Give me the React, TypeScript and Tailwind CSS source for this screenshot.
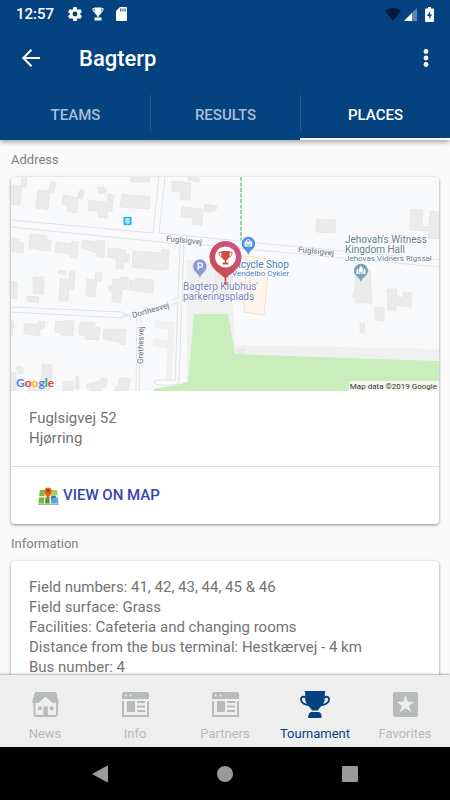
import React, { useState } from 'react';

const BUILDINGS = [
  '11,185 22,186 20,205 11,204',
  '22,177 27,178 26,187 21,186',
  '38,190 50,191 48,210 36,208',
  '50,182 56,183 54,193 49,191',
  '63,195 78,198 77,213 67,211 67,205 62,204',
  '80,190 84,191 82,199 78,198',
  '98,187 106,188 106,194 98,193',
  '89,200 107,202 108,194 114,195 112,211 107,212 107,218 98,217 98,211 88,211',
  '122,194 150,197 149,209 120,207',
  '131,177 150,177 150,182 131,182',
  '11,238 19,239 19,242 24,243 23,253 11,251',
  '30,234 47,236 47,240 51,241 50,251 39,250 29,248',
  '56,242 71,244 72,241 78,242 77,258 70,257 70,254 55,252',
  '83,240 98,242 98,240 105,241 104,258 97,257 97,253 90,251 90,250 82,248',
  '108,248 126,250 126,254 130,255 129,263 124,262 123,269 116,268 116,259 107,257',
  '133,251 161,253 162,249 169,250 168,269 160,270 132,267',
  '172,181 191,183 190,200 180,199 181,192 172,191',
  '188,177 199,177 199,182 188,180',
  '182,207 203,209 202,225 192,224 193,218 181,217',
  '205,204 217,206 216,210 210,212 204,211',
  '11,281 17,282 17,299 11,298',
  '33,277 44,277 43,295 33,293',
  '58,270 66,271 65,274 58,273',
  '27,296 39,297 38,303 27,301',
  '60,279 69,280 70,271 75,272 74,289 69,289 68,301 59,301',
  '87,279 95,280 96,272 102,273 101,281 97,281 95,297 86,296',
  '113,279 121,279 121,277 128,278 127,289 122,290 121,303 112,302 112,292 109,291 109,286 113,286',
  '129,280 135,281 136,278 154,280 153,293 129,290',
  '24,324 38,324 39,321 45,322 44,328 40,329 40,336 24,334',
  '11,320 13,320 13,325 15,325 13,328 12,336 11,336',
  '56,321 66,322 66,320 74,321 73,336 61,335 61,333 55,332',
  '80,322 95,323 95,327 100,328 99,340 85,339 85,336 79,334',
  '104,329 126,329 125,345 120,344 120,342 103,339',
  '16,368 19,366 23,368 23,374 18,373',
  '11,372 16,373 16,391 11,391',
  '42,364 52,365 52,376 49,391 28,391 28,382 42,382',
  '63,382 73,381 73,391 63,391',
  '76,376 79,377 79,389 75,388',
  '87,384 100,381 102,378 107,379 106,387 102,388 101,391 90,391 90,389 87,388',
  '119,378 130,378 129,391 115,391 115,387 119,386',
  '317,219 336,220 335,233 316,232',
  '411,209 423,210 422,226 429,227 430,211 439,212 439,239 428,238 429,231 410,230',
  '355,268 370,270 372,303 355,303 355,298 353,297 353,292 355,292',
  '387,289 396,289 397,297 403,298 403,292 412,293 411,307 403,306 396,305 396,311 388,310',
  '375,307 384,307 384,321 375,320',
  '360,323 365,323 364,333 360,332',
  '238,349 245,349 245,354 238,354',
];

const ROADS = [
  'M11 220 L153 233 L159 177',
  'M165 177 L159 233 L300 247 L439 260',
  'M11 227 L180 244 L178 298 L172 300 M170 306 L178 302 L175 380 L158 380 Q154 381 154 383 Q155 385 158 385 L176 385 Q179 384 179 381 L184 243 L300 254 L439 267',
  'M11 307 L122 312 L123 314 L132 315 M11 312 L122 318 L123 316 L137 317 L136 391 M141 317 L139 391',
];

const INFO = [
  'Field numbers: 41, 42, 43, 44, 45 & 46',
  'Field surface: Grass',
  'Facilities: Cafeteria and changing rooms',
  'Distance from the bus terminal: Hestkærvej - 4 km',
  'Bus number: 4',
];

function StaticMap() {
  return (
    <svg viewBox="11 177 428 214" className="block w-full rounded-t-sm" role="img" aria-label="Map of Fuglsigvej 52" fontFamily="Roboto, sans-serif">
      <rect x="11" y="177" width="428" height="214" fill="#f8f9fb" />
      <polygon points="187,260 217,262 232,290 235,345 439,349 439,363 235,356 230,391 160,391 187,384" fill="#f0f0f0" />
      <polygon points="156,320 175,322 172,380 166,379 167,348 153,347 153,339 168,340 168,329 155,328" fill="#f1f1f1" />
      <polygon points="194,314 228,314 235,354 439,361 439,391 154,391 154,389 176,385 188,382" fill="#c8efbb" />
      <g fill="#ebebeb" stroke="#e0e0e0" strokeWidth="0.6">
        {BUILDINGS.map((points) => (
          <polygon key={points} points={points} />
        ))}
        <polygon points="216,268 233,270 232,295 215,293" />
      </g>
      <polygon points="246,256 269,259 264,315 244,312" fill="#fef6ec" stroke="#f7ddc2" strokeWidth="1" />
      <g fill="none" stroke="#e1e2e4" strokeWidth="1">
        {ROADS.map((d) => (
          <path key={d} d={d} />
        ))}
      </g>
      <path d="M241 177 V240" stroke="#5cb878" strokeWidth="1.2" strokeDasharray="4 1.5" />

      {/* bus stop */}
      <rect x="123.500" y="217" width="8" height="8" rx="0.5" fill="#1eb6f5" />
      <rect x="125.500" y="218.500" width="4" height="5" rx="0.8" fill="#fff" />
      <path d="M126 220.500 h3 M126 222.300 h3" stroke="#1eb6f5" strokeWidth="0.7" />

      {/* street names */}
      <g fill="#6b7075" fontSize="8" stroke="#f8f9fb" strokeWidth="2" paintOrder="stroke">
        <text x="166" y="241" transform="rotate(6 166 241)">Fuglsigvej</text>
        <text x="298" y="252" transform="rotate(6 298 252)">Fuglsigvej</text>
        <text x="133" y="318" transform="rotate(-16 133 318)">Dorthesvej</text>
        <text x="143" y="364" transform="rotate(-89 143 364)">Grethesvej</text>
      </g>

      {/* places */}
      <g stroke="#ffffff" strokeWidth="1.5" paintOrder="stroke">
        <g fill="#5d7f92">
          <text x="345" y="243" fontSize="10">Jehovah's Witness</text>
          <text x="345" y="253" fontSize="10">Kingdom Hall</text>
          <text x="345" y="261" fontSize="8">Jehovas Vidners Rigssal</text>
        </g>
        <g fill="#3f7fc4">
          <text x="232" y="268" fontSize="10">Bicycle Shop</text>
          <text x="232" y="276" fontSize="8">Vendelbo Cykler</text>
        </g>
        <g fill="#7781b8">
          <text x="183" y="290" fontSize="10">Bagterp Klubhus'</text>
          <text x="183" y="300" fontSize="10">parkeringsplads</text>
        </g>
      </g>

      <path d="M200 278 C198.500 273 193 271.500 193 266 A6.800 6.800 0 0 1 206.600 266 C206.600 271.500 201.500 273 200 278Z" fill="#8d97de" />
      <path d="M198.200 270 V263.200 h2.200 a2 2 0 0 1 0 4 h-2" fill="none" stroke="#fff" strokeWidth="1.300" />
      <path d="M248.300 255 C247 250 241.700 249 241.700 243.500 A6.700 6.700 0 0 1 255.100 243.500 C255.100 249 249.600 250 248.300 255Z" fill="#4a90e8" />
      <path d="M244.600 241.500 h7.600 v5 h-7.600z" fill="#fff" />
      <path d="M246.300 241.500 a2 2 0 0 1 4 0" fill="none" stroke="#fff" strokeWidth="1" />
      <path d="M246.500 243.300 a1.900 1.900 0 0 0 3.800 0" fill="none" stroke="#4a90e8" strokeWidth="0.900" />
      <path d="M361 282 C359.600 277 354 276 354 270.800 A7 7 0 0 1 368 270.800 C368 276 362.400 277 361 282Z" fill="#78a3b5" />
      <path d="M356.500 274 v-4 l1-1.500 1 1.500 v4z M363.500 274 v-4 l1-1.500 1 1.500 v4z M359.200 274 v-5.500 l1.800-3 1.800 3 v5.500 h-1.200 v-2 h-1.200 v2z" fill="#fff" />

      {/* location pin */}
      <defs>
        <linearGradient id="pin" x1="1" y1="0" x2="0" y2="1">
          <stop offset="0" stopColor="#cc5690" />
          <stop offset="1" stopColor="#c94a45" />
        </linearGradient>
      </defs>
      <path d="M225.500 284 V272" stroke="#c8424c" strokeWidth="1.500" />
      <circle cx="225.500" cy="283.500" r="1.600" fill="#d0555c" />
      <path d="M225.500 279 C223 274.500 209.500 270 209.500 257 A16 16 0 0 1 241.500 257 C241.500 270 228 274.500 225.500 279Z" fill="url(#pin)" />
      <circle cx="225.500" cy="257" r="10.500" fill="#fff" />
      <path d="M221.300 251 h8.400 v3.500 c0 3-1.700 5-3.400 5.800 v2.200 h2.200 v2 h-6 v-2 h2.200 v-2.200 c-1.700-.8-3.400-2.800-3.400-5.800z" fill="#cf4b43" />
      <path d="M221.300 252.300 h-2.300 c0 3 1.200 4.700 3.500 5.200 M229.700 252.300 h2.300 c0 3-1.200 4.700-3.500 5.200" fill="none" stroke="#cf4b43" strokeWidth="0.900" />

      <text x="16" y="387" fontSize="12" fontWeight="700" fontFamily="Lato, sans-serif">
        <tspan fill="#4285f4">G</tspan>
        <tspan fill="#ea4335">o</tspan>
        <tspan fill="#fbbc05">o</tspan>
        <tspan fill="#4285f4">g</tspan>
        <tspan fill="#34a853">l</tspan>
        <tspan fill="#ea4335">e</tspan>
      </text>
      <rect x="349" y="381" width="90" height="10" fill="#f1f7ee" />
      <text x="437" y="389" fontSize="8" fill="#333" textAnchor="end">
        Map data ©2019 Google
      </text>
    </svg>
  );
}

function MapEmoji() {
  return (
    <svg viewBox="0 0 21 18" className="h-[18px] w-[21px]" aria-hidden="true">
      <path d="M2 3 L19 3 L21 18 L0 18Z" fill="#e9eee0" />
      <path d="M2 3 h5 l-.5 6 h-5.300z M8 3 h4 v6 h-4.300z M1 10.500 h5.300 l-.3 6 h-5.500z" fill="#7dbb3c" />
      <path d="M13 3 h6 l.6 5 -6.600 1z" fill="#a3cf62" />
      <path d="M7.500 10.500 h4 v6 h-4.300z" fill="#4f9440" />
      <path d="M13 12 l6.800-1.500 .7 6 h-7.500z" fill="#5aa9e0" />
      <path d="M13 9.500 l4-1 1.500 2 -5.500 1.500z" fill="#3d6f8c" />
      <path d="M0 17 h21 v1 h-21z" fill="#aab4a4" />
      <path d="M10 13 C9.500 9.500 6.500 7.500 6.500 4 A3.600 3.600 0 0 1 13.700 4 C13.700 7.500 10.500 9.500 10 13Z" fill="#ee5a1c" />
      <circle cx="10.100" cy="3.700" r="1.400" fill="#8c2f10" />
    </svg>
  );
}

function HouseIcon() {
  return (
    <svg viewBox="0 0 27 25" className="h-[25px] w-[27px]" aria-hidden="true">
      <path d="M2.500 10 V22.500 Q2.500 24 4 24 H23.500 Q25 24 25 22.500 V10" fill="none" stroke="currentColor" strokeWidth="1.900" />
      <path d="M3 0 H24 L27 10.800 H20.500 L13.500 4.800 L6.500 10.800 H0Z" fill="currentColor" />
      <path d="M6 14.500 h3.500 v3.500 h-3.500z M18 14.500 h3.500 v3.500 h-3.500z M11.500 25 V15.500 q0-1 1-1 h2.300 q1 0 1 1 V25z" fill="currentColor" />
    </svg>
  );
}

function NewsIcon() {
  return (
    <svg viewBox="0 0 27 25" className="h-[25px] w-[27px]" aria-hidden="true">
      <path d="M0 7 V2 Q0 0 2 0 H25 Q27 0 27 2 V7Z" fill="currentColor" />
      <circle cx="3.800" cy="3.500" r="1" fill="#eee" />
      <circle cx="8.500" cy="3.500" r="1" fill="#eee" />
      <path d="M1 9 V24 H26 V9" fill="none" stroke="currentColor" strokeWidth="2" />
      <path d="M5 9 h8 v11 h-8z" fill="currentColor" />
      <path d="M15 10 h8 M15 14.500 h8 M15 19 h8" stroke="currentColor" strokeWidth="2" />
    </svg>
  );
}

function TrophyIcon() {
  return (
    <svg viewBox="0 0 30 27" className="h-[27px] w-[30px]" aria-hidden="true">
      <path d="M4.500 0 H25.500 L24.800 2 V8 C24.800 13 20 15.500 18 19.500 H12 C10 15.500 5.200 13 5.200 8 V2Z" fill="currentColor" />
      <path d="M5.500 6.500 C3 4.800 1 6 1 8.500 C1 12 5 14 9 14 M24.500 6.500 C27 4.800 29 6 29 8.500 C29 12 25 14 21 14" fill="none" stroke="currentColor" strokeWidth="1.900" />
      <path d="M11 21 H19 Q21 21.500 21.500 24 V26 Q21.500 27 20.500 27 H9 Q8 27 8 26 L8.500 24 Q9 21.500 11 21Z" fill="currentColor" />
    </svg>
  );
}

function StarIcon() {
  return (
    <svg viewBox="0 0 25 25" className="size-[25px]" aria-hidden="true">
      <rect width="25" height="25" rx="2" fill="currentColor" />
      <path d="M12.500 3 L14.800 9.700 H21.500 L16.100 13.700 L18.200 20.300 L12.500 16.300 L6.800 20.300 L8.900 13.700 L3.500 9.700 H10.200Z" fill="#eee" />
    </svg>
  );
}

const NAV = [
  { name: 'News', Icon: HouseIcon },
  { name: 'Info', Icon: NewsIcon },
  { name: 'Partners', Icon: NewsIcon },
  { name: 'Tournament', Icon: TrophyIcon },
  { name: 'Favorites', Icon: StarIcon },
];

function StatusBar() {
  return (
    <div className="flex h-7 items-center justify-between px-4 text-white">
      <div className="flex items-center">
        <span className="text-[15px] font-medium">12:57</span>
        <svg viewBox="2 2 20 20" className="ml-[14px] size-[14px]" fill="currentColor" aria-hidden="true">
          <path d="M19.430 12.980c.04-.32.070-.64.070-.98s-.03-.66-.07-.98l2.110-1.650c.19-.15.240-.42.120-.64l-2-3.460c-.12-.22-.39-.3-.61-.22l-2.490 1c-.52-.4-1.080-.73-1.690-.98l-.38-2.650A.488.488 0 0 0 14 2h-4c-.25 0-.46.180-.49.420l-.38 2.650c-.61.250-1.170.590-1.690.980l-2.490-1c-.23-.09-.49 0-.61.220l-2 3.460c-.13.220-.07.490.12.640l2.110 1.650c-.04.320-.07.650-.07.980s.03.660.070.980l-2.110 1.650c-.19.150-.24.420-.12.640l2 3.460c.12.220.39.300.61.220l2.490-1c.52.400 1.080.730 1.690.980l.38 2.650c.03.240.24.420.49.420h4c.25 0 .46-.18.490-.42l.38-2.650c.61-.25 1.170-.59 1.690-.98l2.490 1c.23.090.49 0 .61-.22l2-3.460c.12-.22.070-.49-.12-.64l-2.110-1.650zM12 15.500a3.500 3.500 0 1 1 0-7 3.500 3.500 0 0 1 0 7z" />
        </svg>
        <svg viewBox="0 0 12 14" className="ml-[10px] h-[14px] w-3" aria-hidden="true">
          <path d="M2.500 .5 h7 v4.500 q-.5 2.500-2.500 3.500 v1.300 h-2 v-1.300 q-2-1-2.500-3.500z M2.500 10.500 h7 v3 h-7z" fill="currentColor" />
          <path d="M2.500 1.500 h-1.700 q0 3.500 2.400 4 M9.500 1.500 h1.700 q0 3.500-2.400 4" fill="none" stroke="currentColor" />
        </svg>
        <svg viewBox="0 0 11 14" className="ml-3 h-[14px] w-[11px]" aria-hidden="true">
          <path d="M4 0 H10 Q11 0 11 1 V13 Q11 14 10 14 H1 Q0 14 0 13 V4Z" fill="currentColor" />
          <path d="M4.700 1.500 v3 M6.900 1.500 v3 M9.100 1.500 v3" stroke="#054280" />
        </svg>
      </div>
      <div className="flex items-center">
        <svg viewBox="0 0 16 13" className="h-[13px] w-4" aria-hidden="true">
          <path d="M0 2.800 Q8 -2.800 16 2.800 L8 13Z" fill="#021b3a" />
        </svg>
        <svg viewBox="0 0 13 13" className="ml-[3px] size-[13px]" aria-hidden="true">
          <path d="M13 0 V13 H0Z" fill="#5b86b0" />
          <path d="M8 5 V13 H0Z" fill="#fff" />
        </svg>
        <svg viewBox="0 0 9 15" className="ml-2 h-[15px] w-[9px]" aria-hidden="true">
          <path d="M3 0 h3 v1.500 h2 q1 0 1 1 v11.500 q0 1-1 1 h-7 q-1 0-1-1 v-11.500 q0-1 1-1 h2z" fill="#fff" />
          <path d="M5.300 4 L2 9 h2.200 v3.500 L7 7.500 h-1.900z" fill="#054280" />
        </svg>
      </div>
    </div>
  );
}

export default function App() {
  const [tab, setTab] = useState('PLACES');
  const [section, setSection] = useState('Tournament');

  return (
    <div className="flex h-screen flex-col overflow-hidden bg-[#fafafa] font-[Roboto,sans-serif]">
      <header className="relative z-10 shrink-0 bg-[#054280] text-white shadow-[0_2px_5px_rgba(0,0,0,0.35)]">
        <StatusBar />
        <div className="flex h-[60px] items-center pl-5 pr-4">
          <button type="button" aria-label="Back">
            <svg viewBox="0 0 22 22" className="size-[22px]" fill="none" stroke="currentColor" strokeWidth="2" aria-hidden="true">
              <path d="M20 11 H4 M11.500 2.800 L3.300 11 L11.500 19.200" />
            </svg>
          </button>
          <h1 className="ml-[37px] text-[22px] font-medium">Bagterp</h1>
          <button type="button" aria-label="More options" className="ml-auto">
            <svg viewBox="0 0 16 20" className="h-5 w-4" fill="currentColor" aria-hidden="true">
              <circle cx="8" cy="3.500" r="2.400" />
              <circle cx="8" cy="10" r="2.400" />
              <circle cx="8" cy="16.500" r="2.400" />
            </svg>
          </button>
        </div>
        <div className="grid h-[52px] grid-cols-3" role="tablist">
          {['TEAMS', 'RESULTS', 'PLACES'].map((name) => (
            <button
              key={name}
              type="button"
              role="tab"
              aria-selected={tab === name}
              onClick={() => setTab(name)}
              className={`flex items-center border-b-2 text-[15px] font-medium ${
                tab === name ? 'border-white text-white' : 'border-transparent text-[#a9bed3]'
              }`}
            >
              <span className={`h-9 w-px ${name === 'TEAMS' ? '' : 'bg-[#285d92]'}`} />
              <span className="flex-1 pt-1">{name}</span>
            </button>
          ))}
        </div>
      </header>

      <main className="min-h-0 flex-1 overflow-y-auto px-[11px] pb-4 [scrollbar-width:none]">
        <h2 className="mb-[5px] mt-2 text-[13px] leading-6 text-[#808080]">Address</h2>
        <section className="rounded-sm bg-white shadow-[0_1px_3px_rgba(0,0,0,0.45)]">
          <StaticMap />
          <p className="px-[18px] pb-[18px] pt-[17px] text-[15px] leading-5 text-[#737373]">
            Fuglsigvej 52
            <br />
            Hjørring
          </p>
          <a href="#map" className="flex h-[58px] items-center gap-1 border-t border-[#e0e0e0] px-[27px] text-[15px] font-medium text-[#3346b0]">
            <MapEmoji />
            VIEW ON MAP
          </a>
        </section>

        <h2 className="mb-[5px] mt-2 text-[13px] leading-6 text-[#808080]">Information</h2>
        <section className="rounded-sm bg-white px-[18px] py-4 text-[15px] leading-5 text-[#737373] shadow-[0_1px_3px_rgba(0,0,0,0.45)]">
          {INFO.map((line) => (
            <p key={line}>{line}</p>
          ))}
        </section>
      </main>

      <nav className="relative z-10 grid h-[72px] shrink-0 grid-cols-5 bg-[#eeeeee] shadow-[0_-1px_2px_rgba(0,0,0,0.3)]">
        {NAV.map(({ name, Icon }) => (
          <button
            key={name}
            type="button"
            onClick={() => setSection(name)}
            className={`flex flex-col items-center pt-4 text-[13px] ${section === name ? 'text-[#054280]' : 'text-[#b7bbbc]'}`}
          >
            <span className="flex h-[27px] items-center">
              <Icon />
            </span>
            <span className="mt-1.5 leading-5">{name}</span>
          </button>
        ))}
      </nav>

      <div className="grid h-[53px] shrink-0 grid-cols-3 place-items-center bg-black px-[37px] text-[#9a9a9a]">
        <button type="button" aria-label="System back">
          <svg viewBox="0 0 16 18" className="h-[18px] w-4" fill="currentColor" aria-hidden="true">
            <path d="M0 9 L15 .8 Q16 .3 16 1.300 V16.700 Q16 17.700 15 17.200Z" />
          </svg>
        </button>
        <button type="button" aria-label="Home" className="size-4 rounded-full bg-current" />
        <button type="button" aria-label="Recent apps" className="size-4 rounded-[1px] bg-current" />
      </div>
    </div>
  );
}
